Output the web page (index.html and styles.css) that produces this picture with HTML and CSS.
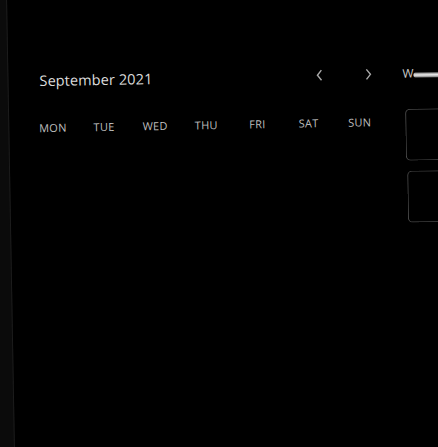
FILE: index.html
```html
<!DOCTYPE html>
<html>
<head>
<meta charset="utf-8">
<link rel="stylesheet" href="styles.css">
</head>
<body>
<div class="screen">
<div class="frame">
  <div class="edge"></div>
  <div class="cal">
    <div class="head">
      <div class="title">September 2021</div>
      <div class="nav">
        <span class="btn"><svg width="8" height="12" viewBox="0 0 8 12"><path d="M6 1 L2 6 L6 11" fill="none" stroke="#a8a8a8" stroke-width="1.4"/></svg></span>
        <span class="btn"><svg width="8" height="12" viewBox="0 0 8 12"><path d="M2 1 L6 6 L2 11" fill="none" stroke="#a8a8a8" stroke-width="1.4"/></svg></span>
      </div>
    </div>
    <div class="days">
      <span>MON</span><span>TUE</span><span>WED</span><span>THU</span><span>FRI</span><span>SAT</span><span>SUN</span>
    </div>
  </div>
  <div class="side">
    <div class="toggle"><span class="w">W</span><span class="bar"></span></div>
    <div class="box"></div>
    <div class="box box2"></div>
  </div>
</div>
</div>
</body>
</html>
```
FILE: styles.css
```css
html, body {
  margin: 0;
  padding: 0;
  background: #000;
}
.screen {
  width: 438px;
  height: 447px;
  overflow: hidden;
  background: #000;
}
.frame {
  width: 478px;
  height: 487px;
  margin: -20px;
  display: flex;
  background: #000;
  transform: rotate(-1deg);
  transform-origin: 239px 243px;
  font-family: "Open Sans", "Liberation Sans", sans-serif;
}
.edge {
  width: 31px;
  flex: none;
  box-sizing: border-box;
  background: #0b0b0b;
  border-right: 1px solid #1c1c1c;
}
.cal {
  flex: none;
  width: 376px;
  box-sizing: border-box;
  padding-left: 18px;
  padding-top: 88px;
}
.head {
  width: 358px;
  display: flex;
  align-items: center;
  justify-content: space-between;
  height: 20px;
}
.title {
  margin-left: 13px;
  color: #dcdcdc;
  font-size: 14.5px;
  line-height: 20px;
  letter-spacing: 0.1px;
}
.nav {
  display: flex;
  gap: 25px;
  margin-right: 4px;
  margin-top: -2px;
}
.btn {
  width: 24px;
  height: 14px;
  display: flex;
  align-items: center;
  justify-content: center;
}
.days {
  margin-top: 30px;
  width: 358px;
  display: grid;
  grid-template-columns: repeat(7, 1fr);
  color: #bdbdbd;
  font-size: 11px;
  line-height: 14px;
  letter-spacing: 0.3px;
  text-align: center;
}
.side {
  flex: 1;
  margin-left: 16px;
  padding-top: 89px;
  display: flex;
  flex-direction: column;
}
.toggle {
  display: flex;
  align-items: center;
  height: 16px;
}
.w {
  color: #c8c8c8;
  font-size: 12px;
  line-height: 16px;
  margin-left: 2px;
}
.bar {
  flex: 1;
  height: 5px;
  margin-top: 2px;
  background: linear-gradient(#777, #eee 50%, #777);
  border-radius: 2px 0 0 2px;
}
.box {
  margin-top: 27px;
  margin-left: 4px;
  height: 50px;
  border: 1px solid #4a4a4a;
  border-right: none;
  border-radius: 5px 0 0 5px;
}
.box2 {
  margin-top: 10px;
  margin-left: 5px;
}
```
